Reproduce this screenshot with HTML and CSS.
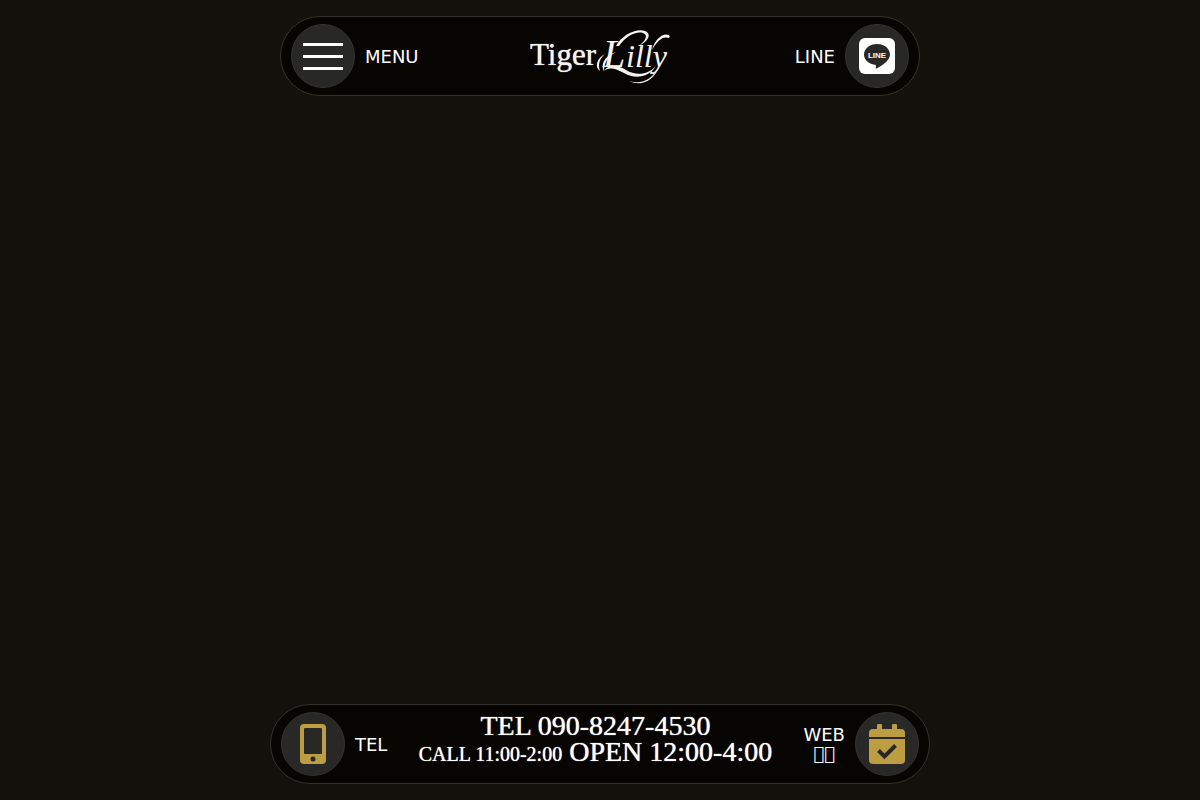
FILE: index.html
```html
<!DOCTYPE html>
<html lang="ja">

<head>
    <meta charset="UTF-8">
    <meta name="viewport" content="width=device-width, initial-scale=1.0">
    <link rel="stylesheet" href="styles.css">
    <title>Tiger Lilly</title>
</head>
<body>

<header class="bar barTop">
    <button class="barItem" type="button">
        <span class="circle menuIcon"><span class="line"></span><span class="line"></span><span class="line"></span></span>
        <span>MENU</span>
    </button>

    <a class="logo" href="#">
        <svg width="140" height="56" viewBox="0 0 140 56" role="img" aria-label="Tiger Lilly">
            <text x="0" y="37" class="logoTiger">Tiger</text>
            <text y="39" class="logoLilly"><tspan x="73" font-size="40">L</tspan><tspan x="96" font-size="32">illy</tspan></text>
            <!--flourishes-->
            <g fill="#f4f3ee">
                <path d="M70 43c-6-4-3-13 5-17-6 5-7 11-5 17z"/>
                <path d="M74 43c-4-7 2-16 12-19-8 4-12 11-12 19z"/>
                <path d="M86 18C92 7 106 0 115 3c8 3 2 12-7 15 7-4 11-11 5-13-7-2-17 3-24 13z"/>
                <path d="M74 43c6-9 15-5 22-1 10 6 22 5 30-4-7 11-20 14-32 7-8-4-14-7-20-2z"/>
                <path d="M99 53c13 4 23-2 30-14-5 13-17 20-30 14z"/>
                <path d="M122 22c2-9 10-18 17-15 1 1 1 3-1 3-5-2-11 3-16 12z"/>
            </g>
        </svg>
    </a>

    <a class="barItem" href="#">
        <span>LINE</span>
        <span class="circle">
            <svg width="36" height="36" viewBox="0 0 36 36" aria-hidden="true">
                <rect width="36" height="36" rx="6" fill="#fff"/>
                <path fill="#282827" d="M18 6C10.800 6 5 10.700 5 16.500c0 5.200 4.600 9.500 10.800 10.300 1.500.3 1.300.9 1 2.700-.1.700 0 1.400 1.200.8C22.500 28 31 22.500 31 16.500 31 10.700 25.200 6 18 6z"/>
                <text x="18" y="20" text-anchor="middle" class="lineText">LINE</text>
            </svg>
        </span>
    </a>
</header>

<footer class="bar barBottom">
    <a class="barItem" href="tel:09082474530">
        <span class="circle">
            <svg width="26" height="40" viewBox="0 0 26 40" aria-hidden="true">
                <path fill="#bd9d42" fill-rule="evenodd" d="M4 0h18a4 4 0 0 1 4 4v32a4 4 0 0 1-4 4H4a4 4 0 0 1-4-4V4a4 4 0 0 1 4-4zM5 4a1 1 0 0 0-1 1v24a1 1 0 0 0 1 1h16a1 1 0 0 0 1-1V5a1 1 0 0 0-1-1zM13 32.500a2.500 2.500 0 1 0 0 5 2.500 2.500 0 0 0 0-5z"/>
            </svg>
        </span>
        <span>TEL</span>
    </a>

    <p class="info">
        TEL 090-8247-4530<br>
        <span class="infoCall">CALL 11:00-2:00</span> OPEN 12:00-4:00
    </p>

    <a class="barItem" href="#">
        <span class="web">WEB<br>&#xE000;&#xE000;</span>
        <span class="circle">
            <svg width="36" height="40" viewBox="0 0 36 40" aria-hidden="true">
                <path fill="#bd9d42" d="M4 5h4V1a1 1 0 0 1 1-1h3a1 1 0 0 1 1 1v4h10V1a1 1 0 0 1 1-1h3a1 1 0 0 1 1 1v4h4a4 4 0 0 1 4 4v4H0V9a4 4 0 0 1 4-4z"/>
                <path fill="#bd9d42" d="M0 15h36v21a4 4 0 0 1-4 4H4a4 4 0 0 1-4-4z"/>
                <path fill="none" stroke="#282827" stroke-width="4" d="M9.500 26.500l6 6L26.500 21.500"/>
            </svg>
        </span>
    </a>
</footer>

</body>
</html>
```

FILE: styles.css
```css
* {
    box-sizing: border-box;
}
body {
    margin: 0;
    padding: 16px;
    min-height: 100vh;
    display: flex;
    flex-direction: column;
    justify-content: space-between;
    align-items: center;
    background-color: #13110c;
    color: #fff;
    font-family: "DejaVu Sans", sans-serif;
    font-size: 18px;
    line-height: 19px;
}
.bar {
    width: 100%;
    max-width: 640px;
    min-height: 80px;
    padding: 7px 10px;
    display: flex;
    justify-content: space-between;
    align-items: center;
    background-color: #070502;
    border: 1px solid #33322f;
    border-radius: 40px;
}
.barTop {
    display: grid;
    grid-template-columns: 1fr auto 1fr;
}
.barTop .barItem:first-child {
    justify-self: start;
}
.barTop .barItem:last-child {
    justify-self: end;
}
.barBottom {
    max-width: 660px;
}
.barItem {
    display: flex;
    align-items: center;
    gap: 10px;
    padding: 0;
    border: 0;
    background: none;
    color: inherit;
    font: inherit;
    text-decoration: none;
    cursor: pointer;
}
.circle {
    width: 64px;
    height: 64px;
    display: flex;
    justify-content: center;
    align-items: center;
    background-color: #282827;
    border: 1px solid #333331;
    border-radius: 50%;
}
.menuIcon {
    flex-direction: column;
    gap: 9px;
}
.line {
    width: 40px;
    height: 3px;
    background-color: #fff;
}

.logo svg {
    display: block;
}
.logoTiger {
    fill: #f4f3ee;
    font-family: "Liberation Serif", serif;
    font-size: 31px;
    text-shadow: 0 0 1px #f4f3ee;
}
.logoLilly {
    fill: #f4f3ee;
    font-family: "Liberation Serif", serif;
    font-style: italic;
}
.lineText {
    fill: #fff;
    font-family: "Liberation Sans", sans-serif;
    font-size: 8px;
    font-weight: bold;
}

.info {
    margin: 0;
    padding-bottom: 8px;
    text-align: center;
    font-family: "Liberation Serif", serif;
    font-size: 28px;
    line-height: 26px;
    text-shadow: 0 0 1px #fff;
}
.infoCall {
    font-size: 20px;
}
.web {
    text-align: center;
}
```
